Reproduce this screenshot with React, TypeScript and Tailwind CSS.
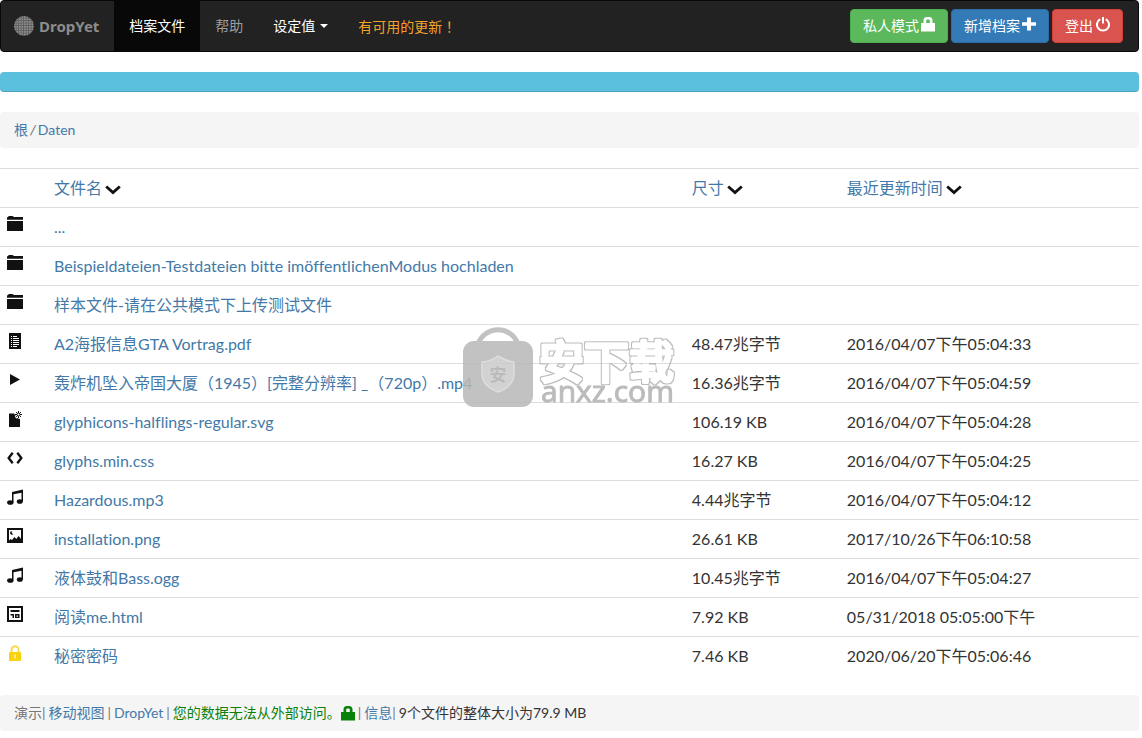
import React from 'react';

type IconName = 'folder' | 'document' | 'play' | 'fileSettings' | 'code' | 'music' | 'image' | 'page' | 'key';

const glyphs: Record<IconName, React.ReactNode> = {
  folder: (
    <>
      <path d="M0 3.800V1.500L1 1l.8-1h3.700L7 1h9v2.800z" />
      <path d="M0 5h16v10H0z" />
    </>
  ),
  document: (
    <>
      <path d="M2 0h12v16H2z" />
      <path d="M4 3.500h1M6 3.500h4M4 5.500h1M6 5.500h6M4 7.500h1M6 7.500h6M4 9.500h1M6 9.500h6M4 11.500h1M6 11.500h6M4 13.500h1M6 13.500h4" stroke="#fff" strokeWidth="1" />
    </>
  ),
  play: <path d="M3 2l10 5.600L3 13z" />,
  fileSettings: (
    <>
      <path d="M2 2.500h5.500v1l1 1-.5 1.500 1.500 1.500L11 7l1 1.200 1-.7V16H2z" />
      <path d="M11.500 0v7M8 3.500h7M9.100 1.100l4.800 4.800M13.900 1.100L9.100 5.900" stroke="#111" strokeWidth="1" />
      <circle cx="11.500" cy="3.500" r="1.500" fill="#fff" stroke="#111" />
    </>
  ),
  code: <path d="M5.700 2.800L1.700 8l4 5.200M10.300 2.800l4 5.200-4 5.200" fill="none" stroke="#111" strokeWidth="2.400" />,
  music: (
    <>
      <path d="M5 3l11-2.500v3L6.500 5.300V13.500H5z" />
      <path d="M14.500 2H16v10.500h-1.500z" />
      <ellipse cx="3.300" cy="13.500" rx="3.200" ry="2.300" />
      <ellipse cx="12.800" cy="12.500" rx="3" ry="2.300" />
    </>
  ),
  image: (
    <>
      <path d="M0 0h16v15H0z" />
      <path d="M2 2h12v9l-1.500-2-1-1-2.200 3L7.500 9 5 12l-1.500-1L2 12.500z" fill="#fff" />
      <path d="M4.800 3A1.900 1.900 0 1 0 6.500 6 2.200 2.200 0 0 1 4.800 3z" />
    </>
  ),
  page: (
    <>
      <path d="M1 1h14v14H1z" fill="#fff" stroke="#111" strokeWidth="2" />
      <path d="M3.500 4h9v2h-9zM3.500 8h3.500v4H5.500V9.500h-2zM8 8h4.500v4H8z" />
      <path d="M9.500 9.500H11v1.200H9.500z" fill="#fff" />
    </>
  ),
  key: (
    <>
      <path d="M4.500 8V4.800a3.500 3.500 0 0 1 7 0V8" fill="none" stroke="#f8dc50" strokeWidth="2" />
      <rect x="2" y="7" width="12" height="9" rx="1" fill="#f8d30c" />
      <path d="M8 9.500v4" stroke="#fff3a0" strokeWidth="1.600" />
    </>
  ),
};

function FileIcon({ name }: { name: IconName }) {
  return (
    <svg viewBox="0 0 16 16" className="block size-4 fill-[#111]" aria-hidden="true">
      {glyphs[name]}
    </svg>
  );
}

function Lock() {
  return (
    <svg viewBox="0 0 14 15" className="inline-block h-[15px] w-3.5 fill-current" aria-hidden="true">
      <path d="M0 6h2.500V3.500A3.500 3.500 0 0 1 6 0h2a3.500 3.500 0 0 1 3.500 3.500V6H14v8.500H0zm5.200 0h3.600V3.600A1.200 1.200 0 0 0 7.600 2.400H6.400a1.200 1.200 0 0 0-1.200 1.200z" />
    </svg>
  );
}

function Plus() {
  return (
    <svg viewBox="0 0 14 15" className="h-[15px] w-3.5 fill-current" aria-hidden="true">
      <path d="M5 .5h4v4.700h5v3.600H9v4.700H5V8.800H0V5.200h5z" />
    </svg>
  );
}

function Power() {
  return (
    <svg viewBox="0 0 14 15" className="h-[15px] w-3.5" fill="none" stroke="currentColor" strokeWidth="2" aria-hidden="true">
      <path d="M4.300 2.200a6 6 0 1 0 5.400 0M7 0v6.500" />
    </svg>
  );
}

function Chevron() {
  return (
    <svg viewBox="0 0 16 10" className="ml-[3px] mt-1 h-2.5 w-4" fill="none" stroke="#111" strokeWidth="2.800" aria-hidden="true">
      <path d="M1.200 1.500L8 7.600l6.800-6.100" />
    </svg>
  );
}

function Logo() {
  return (
    <svg viewBox="0 0 20 20" className="size-5" aria-hidden="true">
      <defs>
        <pattern id="weave" width="2.500" height="2.500" patternUnits="userSpaceOnUse">
          <rect width="2.500" height="2.500" fill="#5c5c5c" />
          <rect width="1.700" height="1.700" fill="#8e8e8e" />
        </pattern>
      </defs>
      <circle cx="10" cy="10" r="10" fill="url(#weave)" />
    </svg>
  );
}

function Watermark() {
  return (
    <svg viewBox="0 0 220 90" className="pointer-events-none absolute left-[460px] top-[155px] h-[90px] w-[220px] overflow-visible" aria-hidden="true">
      <defs>
        <filter id="contour" x="-10%" y="-20%" width="120%" height="140%">
          <feMorphology in="SourceAlpha" operator="dilate" radius="1" result="fat" />
          <feFlood floodColor="#b0b0b0" />
          <feComposite in2="fat" operator="in" />
          <feComposite in2="SourceAlpha" operator="out" />
        </filter>
      </defs>
      <g opacity=".85">
        <path d="M18 21C25 2 51 2 58 21" fill="none" stroke="#b8b8b8" strokeWidth="5" />
        <rect x="3" y="18" width="70" height="66" rx="11" fill="#b8b8b8" />
        <path d="M38 33q8 5 16 6v12c0 9-6 14-16 18-10-4-16-9-16-18V39q9-1 16-6z" fill="#cbcbcb" stroke="#d8d8d8" strokeWidth="1.500" />
        <text x="38" y="58" textAnchor="middle" fontSize="17" fontWeight="700" fill="#b0b0b0" fontFamily="Noto Sans CJK SC, sans-serif">安</text>
        <text x="79" y="56" fontSize="45" fontWeight="500" stroke="#000" strokeWidth="3" strokeLinejoin="round" filter="url(#contour)" fontFamily="Noto Sans CJK SC, sans-serif">安下载</text>
        <text x="81" y="79" fontSize="30" fill="#b0b0b0" stroke="#b0b0b0" strokeWidth="1" fontFamily="Open Sans, sans-serif">anxz.com</text>
      </g>
    </svg>
  );
}

type Row = { icon: IconName; name: string; size?: string; date?: string };

const rows: Row[] = [
  { icon: 'folder', name: '...' },
  { icon: 'folder', name: 'Beispieldateien-Testdateien bitte imöffentlichenModus hochladen' },
  { icon: 'folder', name: '样本文件-请在公共模式下上传测试文件' },
  { icon: 'document', name: 'A2海报信息GTA Vortrag.pdf', size: '48.47兆字节', date: '2016/04/07下午05:04:33' },
  { icon: 'play', name: '轰炸机坠入帝国大厦（1945）[完整分辨率] _（720p）.mp4', size: '16.36兆字节', date: '2016/04/07下午05:04:59' },
  { icon: 'fileSettings', name: 'glyphicons-halflings-regular.svg', size: '106.19 KB', date: '2016/04/07下午05:04:28' },
  { icon: 'code', name: 'glyphs.min.css', size: '16.27 KB', date: '2016/04/07下午05:04:25' },
  { icon: 'music', name: 'Hazardous.mp3', size: '4.44兆字节', date: '2016/04/07下午05:04:12' },
  { icon: 'image', name: 'installation.png', size: '26.61 KB', date: '2017/10/26下午06:10:58' },
  { icon: 'music', name: '液体鼓和Bass.ogg', size: '10.45兆字节', date: '2016/04/07下午05:04:27' },
  { icon: 'page', name: '阅读me.html', size: '7.92 KB', date: '05/31/2018 05:05:00下午' },
  { icon: 'key', name: '秘密密码', size: '7.46 KB', date: '2020/06/20下午05:06:46' },
];

const columns = ['文件名', '尺寸', '最近更新时间'];

export default function App() {
  return (
    <div className="pr-[3px] pb-2 font-['Lato','Noto_Sans_CJK_SC',sans-serif] text-sm leading-5 text-[#333] [font-variant-ligatures:none]">
      <nav className="flex items-stretch justify-between rounded border border-[#080808] bg-[#222]">
        <div className="flex items-stretch">
          <a href="#" className="flex items-center gap-[5px] py-[15px] pr-[15px] pl-[13px] font-['Noto_Sans',sans-serif] text-[15px] leading-5 font-bold text-[#8c8c8c]">
            <Logo />
            DropYet
          </a>
          <a href="#" className="flex items-center bg-[#080808] px-[15px] text-white">档案文件</a>
          <a href="#" className="flex items-center px-[15px] text-[#9d9d9d]">帮助</a>
          <button type="button" className="flex items-center gap-[5px] px-[15px] text-white">
            设定值
            <svg viewBox="0 0 8 4" className="h-1 w-2 fill-current" aria-hidden="true">
              <path d="M0 0h8L4 4z" />
            </svg>
          </button>
          <a href="#" className="flex items-center px-[15px] text-[#f5a12c]">
            <span>有可用的更新<span className="font-['Noto_Sans_CJK_TC',sans-serif]" lang="zh-TW">！</span></span>
          </a>
        </div>
        <div className="flex items-center gap-[3px] py-2 pr-[15px]">
          <button type="button" className="flex items-center gap-0.5 rounded border border-[#4cae4c] bg-[#5cb85c] px-3 py-1.5 text-white">
            私人模式
            <span className="flex pb-1"><Lock /></span>
          </button>
          <button type="button" className="flex items-center gap-0.5 rounded border border-[#2e6da4] bg-[#337ab7] px-3 py-1.5 text-white">
            新增档案
            <span className="flex pb-1"><Plus /></span>
          </button>
          <button type="button" className="flex items-center gap-[3px] rounded border border-[#d43f3a] bg-[#d9534f] px-3 py-1.5 text-white">
            登出
            <span className="flex pb-1"><Power /></span>
          </button>
        </div>
      </nav>

      <div className="my-5 h-5 rounded bg-[#5bc0de] shadow-[inset_0_-1px_0_rgba(0,0,0,0.15)]" />

      <div className="mb-5 flex gap-[2px] rounded bg-[#f5f5f5] px-3.5 py-2 text-[#666]">
        <a href="#" className="text-[#4379a8]">根</a>
        <span className="italic">/</span>
        <a href="#" className="text-[#4379a8]">Daten</a>
      </div>

      <div className="relative">
        <table className="w-full table-fixed border-collapse text-left text-base leading-[22px]">
          <colgroup>
            <col className="w-[46px]" />
            <col className="w-[56%]" />
            <col className="w-[155px]" />
            <col />
          </colgroup>
          <thead>
            <tr className="border-t border-[#ddd]">
              <th />
              {columns.map((label) => (
                <th key={label} className="p-2 font-normal">
                  <a href="#" className="flex items-center text-[#4379a8]">
                    {label}
                    <Chevron />
                  </a>
                </th>
              ))}
            </tr>
          </thead>
          <tbody>
            {rows.map((row) => (
              <tr key={row.name} className="border-t border-[#ddd]">
                <td className="py-2 pl-[7px] align-top">
                  <FileIcon name={row.icon} />
                </td>
                <td className="p-2">
                  <a href="#" className="block truncate text-[#4379a8]">{row.name}</a>
                </td>
                <td className="p-2">{row.size}</td>
                <td className="p-2">{row.date}</td>
              </tr>
            ))}
          </tbody>
        </table>
        <Watermark />
      </div>

      <footer className="mt-5 flex items-center gap-[3px] rounded bg-[#f5f5f5] px-3.5 py-2 text-[#777]">
        <span>演示|</span>
        <a href="#" className="text-[#4379a8]">移动视图</a>
        <span>|</span>
        <a href="#" className="text-[#4379a8]">DropYet</a>
        <span>|</span>
        <span className="flex items-center text-[#0a820a]">
          您的数据无法从外部访问。
          <Lock />
        </span>
        <span>|</span>
        <span><a href="#" className="text-[#4379a8]">信息</a>|</span>
        <span className="text-[#333]">9个文件的整体大小为79.9 MB</span>
      </footer>
    </div>
  );
}
